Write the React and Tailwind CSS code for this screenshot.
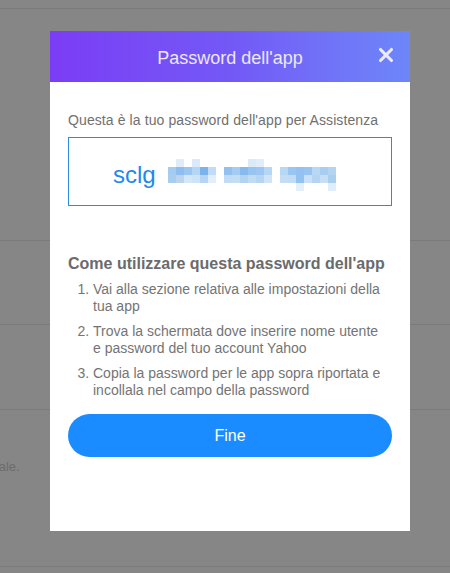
import { X } from 'lucide-react';

// pixelated blur over the hidden part of the password, 8px cells
const W = '#ffffff';
const blurGroups = [
  [
    [W, '#e0ecf8', W, '#daeafa', W, W],
    ['#a6cbf2', '#8fbdf0', '#9cc6f2', '#b4d6f5', '#7db3ec', '#c0dcf6'],
    ['#a8cdee', '#bcd4ee', '#d5e6f6', '#cde3f6', '#b5d5f2', '#e1eefb'],
    [W, W, W, W, W, W],
  ],
  [
    [W, W, W, '#d9eaf8', '#e1eefa', W],
    ['#92c0ef', '#a4cbf2', '#85b9f0', '#97c4f1', '#9dc7f2', '#b5d6f5'],
    ['#c1dcf4', '#c4ddf3', '#b3d3f2', '#c1dbf3', '#b5d6f2', '#d0e4f6'],
    [W, W, W, W, W, W],
  ],
  [
    [W, W, W, W, W, W, W],
    ['#b8d7f5', '#99c5f2', '#94c1f1', '#98c4f2', '#b9d8f6', '#a8cdf3', '#b4d5f2'],
    ['#c5ddf4', '#c2dcf3', '#92c2ef', '#c9e0f6', '#b4d4f1', '#c8def5', '#a8cfee'],
    [W, W, '#e4effa', W, W, W, '#e0edfa'],
  ],
];

const steps = [
  'Vai alla sezione relativa alle impostazioni della tua app',
  'Trova la schermata dove inserire nome utente e password del tuo account Yahoo',
  'Copia la password per le app sopra riportata e incollala nel campo della password',
];

function BlurBlock({ rows }) {
  return (
    <div className="flex flex-col">
      {rows.map((row, r) => (
        <div key={r} className="flex">
          {row.map((c, i) => (
            <div key={i} className="w-[8px] h-[8px]" style={{ backgroundColor: c }} />
          ))}
        </div>
      ))}
    </div>
  );
}

function Backdrop() {
  return (
    <div className="absolute inset-0 flex flex-col bg-[#868686]">
      <div className="h-[9px] border-b border-[#7b7b7b]" />
      <div className="h-[232px] border-b border-[#7b7b7b]" />
      <div className="h-[84px] border-b border-[#7b7b7b]" />
      <div className="h-[85px] border-b border-[#7b7b7b]" />
      <div className="h-[157px] border-b border-[#7b7b7b] pt-[47px] text-[13px] text-[#6c6c6c] -ml-[41px]">
        Principale.
      </div>
    </div>
  );
}

export default function App() {
  return (
    <div
      className="relative w-[450px] h-[573px] overflow-hidden"
      style={{ fontFamily: '"Liberation Sans", Arial, sans-serif' }}
    >
      <Backdrop />
      <div className="relative pt-[31px] pl-[50px]">
        <div className="w-[360px] h-[500px] bg-white flex flex-col">
          <div className="relative h-[51px] flex items-center justify-center bg-gradient-to-r from-[#7b3cf5] via-[#7358f6] to-[#6d86f9]">
            <span className="text-[18px] text-[#ece8fd] mt-[3px]">Password dell'app</span>
            <X
              size={22}
              strokeWidth={3.4}
              className="absolute right-[13px] top-[13px] text-[#ecebfb]"
            />
          </div>
          <div className="px-[18px] pt-[30px]">
            <p className="text-[14px] leading-[16px] tracking-[0.1px] text-[#707070]">
              Questa è la tuo password dell'app per Assistenza
            </p>
            <div className="mt-[9px] h-[69px] border border-[#2b8ae2] flex items-center pl-[44px]">
              <span className="text-[24px] leading-none text-[#1e88ec] mt-[6px]">sclg</span>
              <div className="flex gap-[8px] ml-[12px] mt-[7px]">
                {blurGroups.map((g, i) => (
                  <BlurBlock key={i} rows={g} />
                ))}
              </div>
            </div>
            <h2 className="mt-[48px] text-[16px] leading-[20px] font-bold text-[#6b6b6b]">
              Come utilizzare questa password dell'app
            </h2>
            <ol className="mt-[7px] list-decimal pl-[25px] pr-[7px] text-[14px] leading-[16.5px] text-[#747474] flex flex-col gap-[9px]">
              {steps.map((s) => (
                <li key={s}>{s}</li>
              ))}
            </ol>
            <button className="mt-[16px] w-full h-[43px] rounded-full bg-[#1a8cff] text-white text-[16px]">
              Fine
            </button>
          </div>
        </div>
      </div>
    </div>
  );
}
